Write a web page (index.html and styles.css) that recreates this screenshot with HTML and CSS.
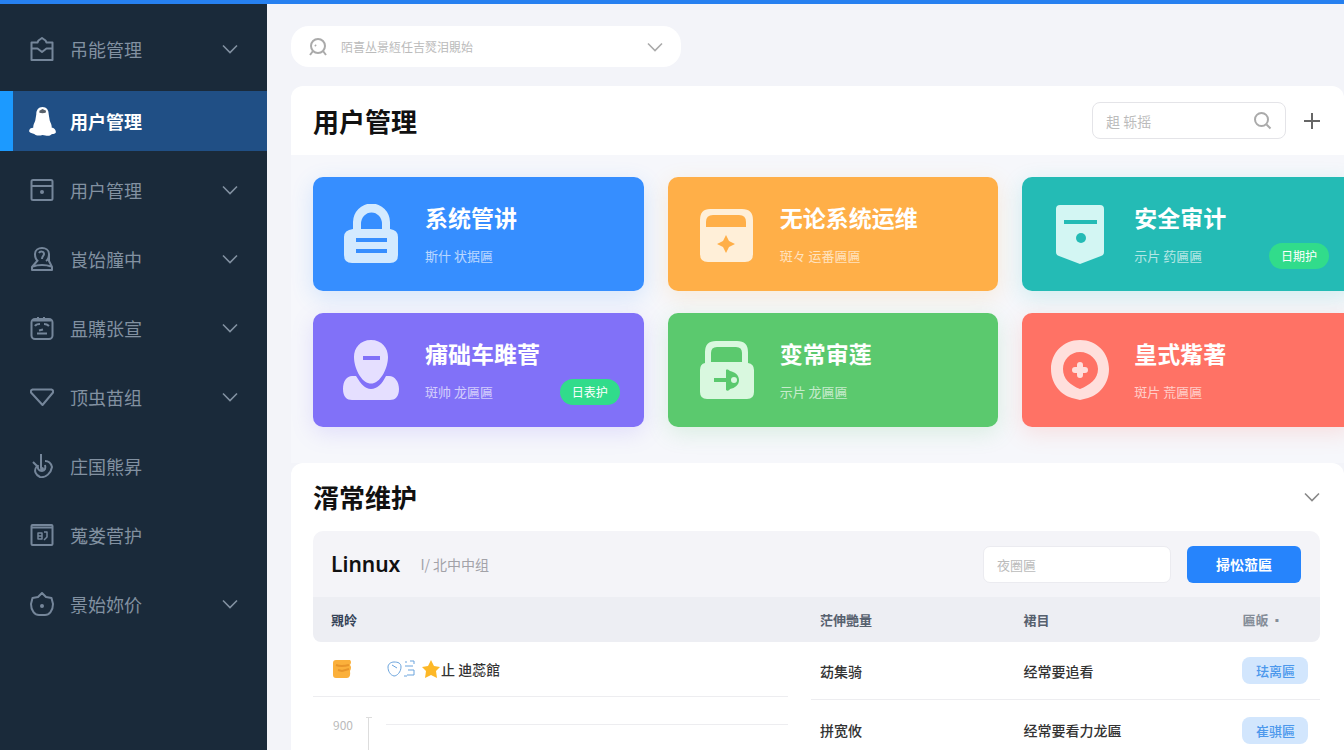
FILE: index.html
```html
<!DOCTYPE html>
<html lang="zh-CN">
<head>
    <meta charset="utf-8">
    <title>用户管理</title>
    <link rel="stylesheet" href="styles.css">
</head>
<body>
    <svg class="sprite" aria-hidden="true">
        <symbol id="chevron" viewBox="0 0 16 10"><path d="M1 1.500l7 7 7-7" fill="none" stroke="currentColor" stroke-width="1.600"/></symbol>
    </svg>
    <div class="layout">
        <nav class="sidebar">
            <ul class="nav-list">
                <li><a href="#" class="nav-item">
                    <svg class="nav-icon" viewBox="0 0 24 24"><path d="M1.500 5.500h6l1-2 3.500-2.500 3.500 2.500 1 2h6V23H1.500z"/><path d="M1.500 11.500h6l4.500 3.500 4.500-3.500h6"/></svg>
                    吊能管理<svg class="chevron"><use href="#chevron"/></svg></a></li>
            </ul>
            <ul class="nav-list">
                <li><a href="#" class="nav-item active">
                    <svg class="nav-icon penguin" viewBox="0 0 26 30"><path d="M13 1c4 0 6 3 6 7l1 6c1 3 2 4 2 7 2 0 4 2 4 4.500-1 2-4 1.500-5 2.500-3 2-5 0-8 0-3 1-6 1-8-1-2-.5-4-.5-5-2.500C0 22 2 21 4 21c0-3 1-4 2-7l1-6c0-4 2-7 6-7z"/><path class="face" d="M10 4.500l3-1.500 3.500 1.500-.5 2-3 .5-3-.5z"/></svg>
                    用户管理</a></li>
                <li><a href="#" class="nav-item">
                    <svg class="nav-icon" viewBox="0 0 24 24"><rect x="1.500" y="2" width="21" height="20" rx="1.500"/><path d="M2 8h20"/><circle class="dot" cx="12" cy="14" r="2"/></svg>
                    用户管理<svg class="chevron"><use href="#chevron"/></svg></a></li>
                <li><a href="#" class="nav-item">
                    <svg class="nav-icon" viewBox="0 0 24 24"><path d="M8 14C5 12 5 9 5 7c0-8 14-8 14 0 0 3 0 5-3 7M8 13l-6 7v3h20v-3l-3-6V7M3 19.500c5-2 13-2 18 0"/><path d="M9 6c1-2 5-2 5 1 0 2-2 2-2 5"/></svg>
                    崀饴膧中<svg class="chevron"><use href="#chevron"/></svg></a></li>
                <li><a href="#" class="nav-item">
                    <svg class="nav-icon" viewBox="0 0 24 24"><rect x="1.500" y="3" width="21" height="20" rx="3.500"/><path d="M3 4.500h18M8 1v3M14 1v3M5 10c1-2 3-2 5-2M14 8c3 0 4 1 5 2M7 17.500h10M9 14.500l4-1"/></svg>
                    昷購张宣<svg class="chevron"><use href="#chevron"/></svg></a></li>
                <li><a href="#" class="nav-item">
                    <svg class="nav-icon" viewBox="0 0 24 24"><path d="M2.500 4.500h19q2 .5 1.500 3L12.500 20 1 7.500q-.5-2.500 1.500-3z"/></svg>
                    顶虫苗组<svg class="chevron"><use href="#chevron"/></svg></a></li>
                <li><a href="#" class="nav-item">
                    <svg class="nav-icon" viewBox="0 0 24 24"><path d="M11 0v14M3 8l4 4c-4 5-1 9 3 11 6 1 11-4 12-10-1-4-3-6-7-6"/><path d="M8 11c-1 4 1 6 4 6s4-3 3-6"/><circle class="dot" cx="12" cy="15" r="2"/></svg>
                    庄国熊昇</a></li>
                <li><a href="#" class="nav-item">
                    <svg class="nav-icon" viewBox="0 0 24 24"><rect x="1.500" y="2" width="21" height="20" rx="1"/><path d="M2 4.500h20"/><path d="M8 10h4v6H8zM8 13h4M14 9h3v5l-3 3" stroke-width="1.500"/></svg>
                    蒐娄菅护</a></li>
                <li><a href="#" class="nav-item">
                    <svg class="nav-icon" viewBox="0 0 24 24"><path d="M12 1L8 5 2.500 6 1 12c0 7 4 11 8 11h6c4 0 8-4 8-11l-1.500-6L16 5z"/><circle class="dot" cx="12" cy="14" r="2"/></svg>
                    景始妳价<svg class="chevron"><use href="#chevron"/></svg></a></li>
            </ul>
        </nav>

        <main class="content">
            <div class="global-search">
                <svg class="search-face" viewBox="0 0 18 18"><circle cx="9" cy="8" r="7"/><path d="M4 13l-3 4M14 13l3 4M6 7l1 1"/></svg>
                <input type="text" aria-label="搜索" placeholder="陌喜丛景絚任吉燹泪覞始">
                <button type="button" class="icon-button" aria-label="展开"><svg class="chevron"><use href="#chevron"/></svg></button>
            </div>

            <header class="page-header">
                <h1>用户管理</h1>
                <div class="header-search">
                    <input type="text" aria-label="筛选" placeholder="趄 轹摇">
                    <svg class="magnifier" viewBox="0 0 18 18"><circle cx="7.500" cy="7.500" r="6.500"/><path d="M12.500 12.500l4 4"/></svg>
                </div>
                <button type="button" class="icon-button" aria-label="新增"><svg class="plus" viewBox="0 0 16 16"><path d="M8 0v16M0 8h16"/></svg></button>
            </header>

            <section class="cards">
                <article class="card blue">
                    <svg class="card-icon" viewBox="0 0 60 60"><path fill-rule="evenodd" d="M12 25V18a18 18 0 0 1 37 0v7q8 1 8 8v18q0 8-8 8H11q-8 0-8-8V33q0-7 9-8zM20 25h21v-5a10 11 0 0 0-21 0z"/><path class="cut" d="M15 36h31M15 47h31"/></svg>
                    <div><h2>系统管讲</h2><p>斯什 状据匾</p></div>
                </article>
                <article class="card orange">
                    <svg class="card-icon" viewBox="0 0 60 60"><path fill-rule="evenodd" d="M14 5h32q11 0 11 11v34q0 8-8 8H12q-8 0-8-8V16Q4 5 14 5zM10 23h40v-5q0-7-7-7H17q-7 0-7 7z"/><path class="hole" d="M30 31l3 6 6 3-6 3-3 6-3-6-6-3 6-3z"/></svg>
                    <div><h2>无论系统运维</h2><p>斑々 运番匾匾</p></div>
                </article>
                <article class="card teal">
                    <svg class="card-icon" viewBox="0 0 60 60"><path d="M10 1h40q4 0 4 4v43q0 3-3 4L30 60 9 52q-3-1-3-4V5q0-4 4-4z"/><path class="cut" d="M14 18h33"/><circle class="hole" cx="31" cy="34" r="5"/></svg>
                    <div><h2>安全审计</h2><p>示片 药匾匾</p></div>
                    <span class="badge">日期护</span>
                </article>
                <article class="card purple">
                    <svg class="card-icon" viewBox="0 0 60 60"><path d="M30 0c11 0 17 8 17 17 0 11-7 24-14 26q-3 1-6 0c-7-2-14-15-14-26C13 8 19 0 30 0z"/><path d="M11 36h4c5 8 9 13 15 13s11-5 15-13h3c6 0 10 6 10 13 0 8-4 11-9 11H11C6 60 2 57 2 49c0-8 4-13 9-13z"/><path class="cut" d="M22 18h17"/></svg>
                    <div><h2>痡础车雎菅</h2><p>斑帅 龙匾匾</p></div>
                    <span class="badge">日表护</span>
                </article>
                <article class="card green">
                    <svg class="card-icon" viewBox="0 0 60 60"><path fill-rule="evenodd" d="M9 23V12Q9 1 20 1h21q11 0 11 11v11q6 1 6 7v22q0 7-7 7H11q-7 0-7-7V30q0-6 5-7zM15 22h31v-9q0-6-6-6H21q-6 0-6 6z"/><path class="cut" d="M18 40h13"/><path class="hole" fill-rule="evenodd" d="M30 30c1-1 3 0 4 1 5 1 9 4 9 9s-4 8-9 9c-1 2-3 2-4 1zM38 37a3 3 0 1 0 0 6 3 3 0 0 0 0-6z"/></svg>
                    <div><h2>变常审莲</h2><p>示片 龙匾匾</p></div>
                </article>
                <article class="card red">
                    <svg class="card-icon" viewBox="0 0 60 60"><path fill-rule="evenodd" d="M30 0c17 0 29 13 29 29 0 15-10 26-21 29l-8 2-8-2C11 55 1 44 1 29 1 13 13 0 30 0zM30 12c-10 0-17 8-17 17 0 10 7 16 17 20 10-4 18-10 18-20 0-9-8-17-18-17z"/><path class="cross" d="M30 25v10M25 30h10"/></svg>
                    <div><h2>皇式觜著</h2><p>斑片 荒匾匾</p></div>
                </article>
            </section>

            <section class="panel">
                <header class="panel-header">
                    <h1>湑常维护</h1>
                    <button type="button" class="icon-button" aria-label="收起"><svg class="chevron"><use href="#chevron"/></svg></button>
                </header>
                <div class="toolbar">
                    <h3>Linnux</h3>
                    <span class="toolbar-note">I/ 北中中组</span>
                    <input type="text" aria-label="查询" placeholder="夜圈匾">
                    <button type="button" class="primary">掃忪蒞匾</button>
                </div>
                <div class="tables">
                    <table class="task-table">
                        <colgroup><col><col class="spacer"></colgroup>
                        <thead><tr><th colspan="2">覭皊</th></tr></thead>
                        <tbody>
                            <tr>
                                <td class="ruled">
                                    <div class="task">
                                        <svg class="stack" viewBox="0 0 20 20"><path d="M4 1h14q2 2 0 5 2 2 0 6 1 7-3 7H4q-3 0-3-3V4q0-3 3-3z"/><path class="line" d="M4 6q5 2 13 0M6 11l4 1 7-2"/></svg>
                                        <svg class="pins" viewBox="0 0 30 18"><path d="M7 2c4 0 7 1 7 5 0 5-4 9-7 9-4-1-6-5-6-9 0-3 3-5 6-5zM5 5l5 3M18 2h2M23 1h4v3M18 6h8M21 10h6v5h-7M17 16h3"/></svg>
                                        <svg class="star" viewBox="0 0 20 20"><path d="M10 1l3 6 6 1-4 4 1 7-6-3-6 3 1-7-4-4 6-1z"/></svg>
                                        <span>止 迪蕊館</span>
                                    </div>
                                </td>
                                <td></td>
                            </tr>
                            <tr>
                                <td>
                                    <div class="chart">
                                        <span>900</span>
                                        <i class="axis"></i>
                                        <i class="grid-line"></i>
                                    </div>
                                </td>
                                <td></td>
                            </tr>
                        </tbody>
                    </table>
                    <table class="status-table">
                        <thead><tr><th class="col-name">茫伸艷量</th><th class="col-desc">裙目</th><th class="col-state">匾皈 <small>▪</small></th></tr></thead>
                        <tbody>
                            <tr><td>苭集骑</td><td>经常要追看</td><td><span class="tag">珐离匾</span></td></tr>
                            <tr><td>拼宽攸</td><td>经常要看力龙匾</td><td><span class="tag">崔骐匾</span></td></tr>
                        </tbody>
                    </table>
                </div>
            </section>
        </main>
    </div>
</body>
</html>
```

FILE: styles.css
```css
* {
    box-sizing: border-box;
}
body {
    margin: 0;
    overflow: hidden;
    border-top: 4px solid #2680f0;
    background: #f3f4f9;
    color: #111;
    font-family: "Noto Sans CJK SC", "Noto Sans", sans-serif;
}
h1, h2, h3, p, ul {
    margin: 0;
    padding: 0;
}
input, button {
    font-family: inherit;
    border: none;
    outline: none;
}
button {
    cursor: pointer;
}
.sprite {
    display: none;
}
.chevron {
    width: 16px;
    height: 10px;
    flex: none;
}
.layout {
    display: flex;
    min-height: calc(100vh - 4px);
}

/* sidebar */
.sidebar {
    flex: 0 0 267px;
    display: flex;
    flex-direction: column;
    gap: 12px;
    padding-top: 15px;
    background: #1a2a3a;
}
.nav-list {
    display: flex;
    flex-direction: column;
    gap: 9px;
    list-style: none;
}
.nav-item {
    display: flex;
    align-items: center;
    gap: 16px;
    height: 60px;
    padding: 0 29px 0 30px;
    color: #8291a1;
    font-size: 18px;
    text-decoration: none;
}
.nav-item .chevron {
    margin-left: auto;
}
.nav-icon {
    width: 24px;
    height: 24px;
    fill: none;
    stroke: #75869a;
    stroke-width: 2;
    stroke-linejoin: round;
}
.nav-icon .dot {
    fill: #75869a;
    stroke: none;
}
.nav-item.active {
    gap: 14px;
    padding-left: 16px;
    border-left: 13px solid #1c9aff;
    background: #204f85;
    color: #fff;
    font-weight: 700;
}
.nav-icon.penguin {
    width: 27px;
    height: 31px;
    fill: #fff;
    stroke: none;
}
.nav-icon .face {
    fill: #59616a;
}

/* main column */
.content {
    flex: 1;
    min-width: 0;
    padding: 22px 0 0 24px;
}
.icon-button {
    display: flex;
    padding: 0;
    background: none;
    color: #888;
}
.global-search {
    display: flex;
    align-items: center;
    gap: 14px;
    width: 37%;
    height: 41px;
    padding: 0 18px;
    border-radius: 18px;
    background: #fff;
}
.global-search input {
    flex: 1;
    min-width: 0;
    padding: 0;
    font-size: 12px;
}
.global-search .icon-button {
    color: #aaa;
}
input::placeholder {
    color: #bbb;
    opacity: 1;
}
.search-face {
    width: 18px;
    height: 18px;
    fill: none;
    stroke: #aaa;
    stroke-width: 2;
}
.page-header {
    display: flex;
    align-items: center;
    height: 69px;
    margin-top: 19px;
    padding: 0 24px 0 22px;
    border-radius: 12px 12px 0 0;
    background: #fff;
}
h1 {
    font-size: 26px;
    line-height: 36px;
    font-weight: 700;
}
.header-search {
    display: flex;
    align-items: center;
    width: 194px;
    height: 37px;
    margin: 0 18px 0 auto;
    padding: 0 13px;
    border: 1px solid #e4e4e8;
    border-radius: 8px;
}
.header-search input {
    flex: 1;
    min-width: 0;
    padding: 0;
    font-size: 14px;
}
.magnifier {
    width: 18px;
    height: 18px;
    fill: none;
    stroke: #aaa;
    stroke-width: 2;
}
.plus {
    width: 16px;
    height: 16px;
    stroke: #666;
    stroke-width: 2;
}

/* cards, the last column runs past the window edge */
.cards {
    display: grid;
    grid-template-columns: repeat(3, 1fr);
    gap: 22px 24px;
    margin-right: -9px;
    padding: 22px 0 36px 22px;
    background: #f6f7fb;
}
.card {
    display: flex;
    align-items: center;
    gap: 24px;
    height: 114px;
    padding: 0 24px 0 28px;
    border-radius: 10px;
    background: var(--tone);
    box-shadow: 0 6px 22px var(--glow);
    color: #fff;
    white-space: nowrap;
}
.blue { --tone: #368eff; --glow: #368eff2e; --icon: #d3eaff; }
.orange { --tone: #ffaf48; --glow: #ffaf482e; --icon: #ffefd8; }
.teal { --tone: #24bbb5; --glow: #24bbb52e; --icon: #d3f6f3; }
.purple { --tone: #8171f8; --glow: #8171f82e; --icon: #e5dfff; }
.green { --tone: #5bc96e; --glow: #5bc96e2e; --icon: #d9f8df; }
.red { --tone: #ff7265; --glow: #ff72652e; --icon: #ffdfdc; }
.card-icon {
    flex: none;
    width: 60px;
    height: 60px;
    fill: var(--icon);
}
.card-icon .cut {
    stroke: var(--tone);
    stroke-width: 4;
    stroke-linejoin: round;
}
.card-icon .hole {
    fill: var(--tone);
}
.card-icon .cross {
    stroke: var(--icon);
    stroke-width: 6;
    stroke-linecap: round;
}
.card h2 {
    font-size: 23px;
    line-height: 30px;
    font-weight: 700;
}
.card p {
    margin-top: 14px;
    font-size: 13px;
    line-height: 20px;
    opacity: .65;
}
.card > div {
    flex: 1;
    width: 0;
}
.badge {
    align-self: flex-end;
    width: 60px;
    margin-bottom: 22px;
    border-radius: 13px;
    background: #31dc8b;
    font-size: 12px;
    line-height: 26px;
    text-align: center;
}

/* maintenance panel */
.panel {
    position: relative;
    padding: 0 24px 0 22px;
    border-radius: 12px 12px 0 0;
    background: #fff;
}
.panel-header {
    display: flex;
    align-items: center;
    justify-content: space-between;
    height: 68px;
}
.toolbar {
    display: flex;
    align-items: center;
    height: 66px;
    padding: 0 19px 0 18px;
    border-radius: 10px 10px 0 0;
    background: #f4f4f8;
}
.toolbar h3 {
    font-family: "Noto Sans", sans-serif;
    font-size: 21px;
    font-weight: 600;
}
.toolbar-note {
    margin-left: 20px;
    color: #a2a2a8;
    font-size: 14px;
}
.toolbar input {
    width: 188px;
    height: 37px;
    margin: 0 16px 0 auto;
    padding: 0 13px;
    border: 1px solid #ebebf0;
    border-radius: 7px;
    font-size: 13px;
}
.primary {
    width: 114px;
    height: 37px;
    border-radius: 6px;
    background: #2684fc;
    color: #fff;
    font-size: 14px;
    font-weight: 700;
}
.tables {
    display: flex;
    align-items: flex-start;
}
table {
    border-collapse: separate;
    border-spacing: 0;
    table-layout: fixed;
    font-size: 14px;
}
.task-table {
    flex: 498;
    width: 0;
}
.status-table {
    flex: 509;
    width: 0;
}
th {
    height: 45px;
    padding: 0 9px;
    background: #edeef3;
    color: #56606e;
    font-size: 13px;
    font-weight: 700;
    text-align: left;
}
td {
    height: 60px;
    padding: 0 9px;
    color: #333;
    font-weight: 500;
}
.status-table tr:first-child td {
    height: 58px;
    border-bottom: 1px solid #ededf0;
}
.task-table th {
    padding-left: 18px;
    border-radius: 0 0 0 8px;
    color: #344256;
}
.task-table td {
    padding: 0;
}
.task-table tr:first-child td {
    height: 55px;
}
.task-table .ruled {
    border-bottom: 1px solid #ededf0;
}
.task-table .spacer {
    width: 23px;
}
.status-table .col-name {
    width: 40%;
}
.status-table .col-desc {
    width: 43%;
}
.status-table .col-state {
    border-radius: 0 0 8px 0;
    color: #858d98;
}
.tag {
    display: block;
    width: 66px;
    border-radius: 8px;
    background: #d2e6fd;
    color: #4c98ec;
    font-size: 13px;
    line-height: 27px;
    text-align: center;
}
.task {
    display: flex;
    align-items: center;
    padding-left: 19px;
}
.stack {
    width: 20px;
    height: 20px;
    margin-right: 35px;
    fill: #fbb03b;
}
.stack .line {
    fill: none;
    stroke: #e8952a;
    stroke-width: 2;
}
.pins {
    width: 30px;
    height: 18px;
    margin-right: 4px;
    fill: none;
    stroke: #6ba4dd;
    stroke-width: 1;
}
.star {
    width: 20px;
    height: 20px;
    fill: #fdb827;
}
.chart {
    display: flex;
    align-items: flex-start;
    height: 60px;
    padding: 20px 0 0 20px;
    color: #bbb;
    font-size: 12px;
    font-weight: 400;
    line-height: 16px;
}
.axis {
    width: 6px;
    height: 40px;
    margin-left: 13px;
    border-top: 1px solid #ddd;
    background: linear-gradient(#ddd, #ddd) center / 1px 100% no-repeat;
}
.grid-line {
    flex: 1;
    height: 8px;
    margin-left: 14px;
    border-bottom: 1px solid #ededf0;
}
```
